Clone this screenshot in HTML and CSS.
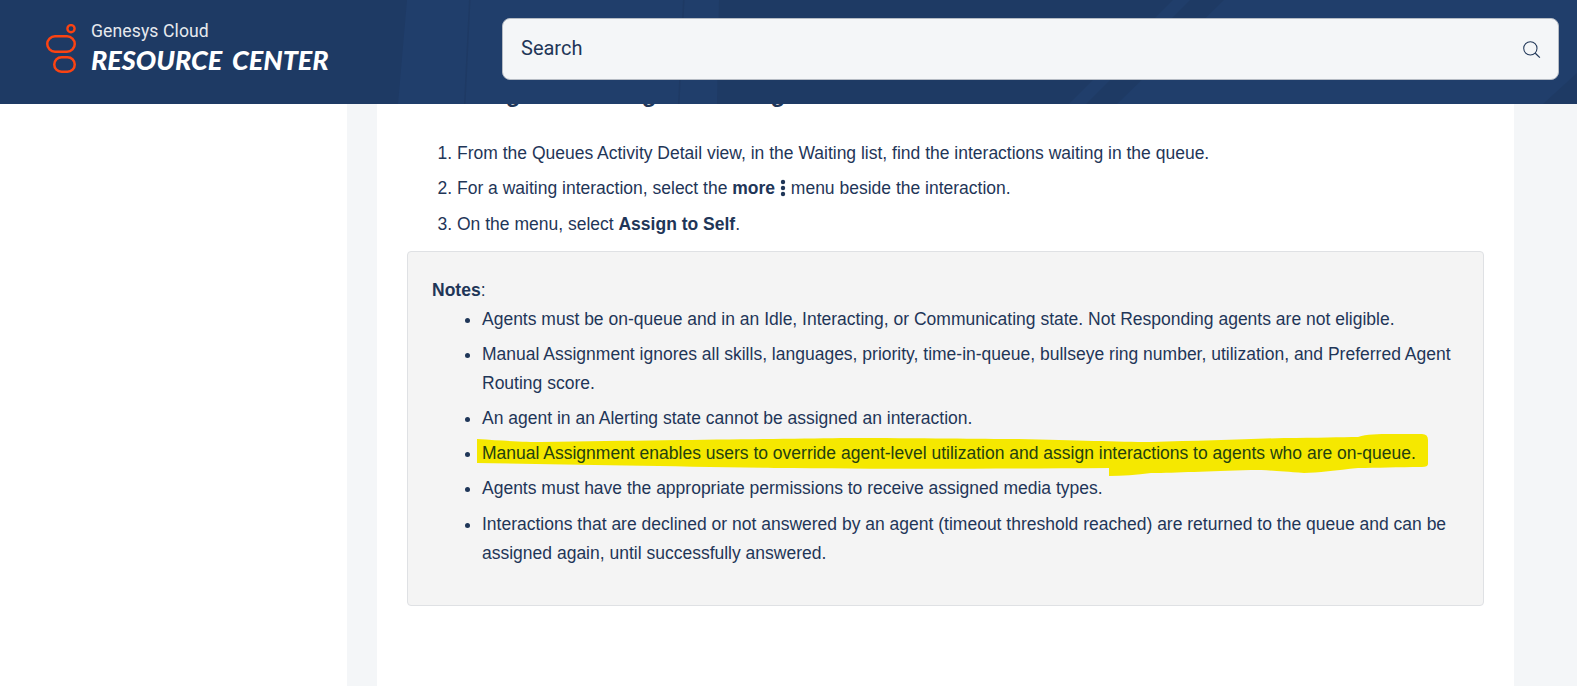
FILE: index.html
```html
<!DOCTYPE html>
<html lang="en">
<head>
<meta charset="utf-8">
<title>Genesys Cloud Resource Center</title>
<link rel="stylesheet" href="styles.css">
</head>
<body>
<header class="site-header">
  <svg class="stripes" viewBox="0 0 1577 104" preserveAspectRatio="none" aria-hidden="true">
    <polygon points="407,0 1577,0 1577,104 398,104" fill="#203e6b"/>
    <polygon points="469,0 470.5,0 465.5,104 464,104" fill="#1e3a64"/>
    <polygon points="683,0 684.5,0 679.5,104 678,104" fill="#1e3a64"/>
    <polygon points="719,0 1173,0 1069,104 717,104" fill="#1e3a64"/>
    <polygon points="1190,0 1224,0 1117,104 1086,104" fill="#1e3a64"/>
    <polygon points="1577,73 1577,104 1543,104" fill="#1e3a64"/>
  </svg>
  <a class="brand" href="#">
    <svg class="logo" viewBox="0 0 30 49" aria-hidden="true">
      <circle cx="25" cy="4.7" r="3.6" fill="none" stroke="#fb4312" stroke-width="2.4"/>
      <rect x="1.25" y="12.25" width="27.5" height="15.5" rx="7.75" fill="none" stroke="#fb4312" stroke-width="2.5"/>
      <rect x="8.25" y="33.25" width="20.5" height="14.5" rx="7.25" fill="none" stroke="#fb4312" stroke-width="2.5"/>
    </svg>
    <span class="brand-text">
      <span class="brand-top">Genesys Cloud</span>
      <span class="brand-main">RESOURCE CENTER</span>
    </span>
  </a>
  <div class="search">
    <span class="search-label">Search</span>
    <svg class="search-icon" viewBox="0 0 20 20" aria-hidden="true">
      <circle cx="8.8" cy="8.8" r="7" fill="none" stroke="#1f3658" stroke-width="1.1"/>
      <path d="M14 14l4.8 4.6" fill="none" stroke="#1f3658" stroke-width="1.3"/>
    </svg>
  </div>
</header>
<div class="page">
  <aside class="side"></aside>
  <div class="gutter"></div>
  <main class="content">
    <h2 class="clipped-heading">Self-assign a waiting call to agent</h2>
    <ol class="steps">
      <li>From the Queues Activity Detail view, in the Waiting list, find the interactions waiting in the queue.</li>
      <li>For a waiting interaction, select the <b>more</b> <svg class="kebab" viewBox="0 0 6 18" aria-hidden="true"><circle cx="3" cy="3" r="2.2"/><circle cx="3" cy="9" r="2.2"/><circle cx="3" cy="15" r="2.2"/></svg> menu beside the interaction.</li>
      <li>On the menu, select <b>Assign to Self</b>.</li>
    </ol>
    <section class="notes">
      <p class="notes-title"><b>Notes</b>:</p>
      <ul class="notes-list">
        <li>Agents must be on-queue and in an Idle, Interacting, or Communicating state. Not Responding agents are not eligible.</li>
        <li>Manual Assignment ignores all skills, languages, priority, time-in-queue, bullseye ring number, utilization, and Preferred Agent Routing score.</li>
        <li>An agent in an Alerting state cannot be assigned an interaction.</li>
        <li><span class="marked"><svg class="marker" viewBox="0 0 951 44" preserveAspectRatio="none" aria-hidden="true"><path d="M0 6C30 8 50 9 64 9C200 7 300 6 364 5C450 5 500 6 541 6C600 7 640 9 674 9C720 8 770 6 807 5C840 5 865 4 881 4C890 1 900 1 915 1L945 1Q951 1 951 7V31Q951 34 945 34C920 34 900 35 881 35C860 37 840 40 827 40C800 38 790 37 774 37C730 38 700 40 674 40C660 42 645 43 632 43V35C500 36 400 36 297 35C180 33 80 31 0 30Z" fill="#f5e800"/></svg><span class="marked-text">Manual Assignment enables users to override agent-level utilization and assign interactions to agents who are on-queue.</span></span></li>
        <li>Agents must have the appropriate permissions to receive assigned media types.</li>
        <li>Interactions that are declined or not answered by an agent (timeout threshold reached) are returned to the queue and can be assigned again, until successfully answered.</li>
      </ul>
    </section>
  </main>
  <div class="gutter"></div>
</div>
</body>
</html>
```

FILE: styles.css
```css
* { box-sizing: border-box; }
html, body { margin: 0; padding: 0; height: 100%; overflow: hidden; }
body { background: #fff; color: #1f3658; font-family: "Liberation Sans", Arial, sans-serif; font-size: 17.5px; }

.site-header { position: relative; height: 104px; background: #1e3a64; display: flex; align-items: flex-start; z-index: 2; }
.stripes { position: absolute; inset: 0; width: 100%; height: 100%; }
.brand { position: relative; display: flex; align-items: flex-start; width: 502px; padding: 24px 0 0 46px; color: #fff; text-decoration: none; flex: none; }
.logo { width: 30px; height: 49px; flex: none; }
.brand-text { display: flex; flex-direction: column; margin-left: 15px; margin-top: -2px; }
.brand-top { font-family: Roboto, sans-serif; font-size: 17.6px; line-height: 18px; color: #e6e9ee; letter-spacing: .1px; }
.brand-main { margin-top: 5px; font-family: Lato, sans-serif; font-weight: 900; font-style: italic; font-size: 27px; line-height: 30px; word-spacing: 4px; white-space: nowrap; }

.search { position: relative; width: 1057px; height: 62px; margin-top: 18px; padding: 0 17px 0 18px; display: flex; align-items: center; justify-content: space-between; background: #f4f6f8; border: 1px solid #b5bbc4; border-radius: 8px; }
.search-label { font-family: Roboto, sans-serif; font-size: 20px; color: #1f3658; margin-bottom: 2px; }
.search-icon { width: 19px; height: 19px; }

.page { display: flex; height: 582px; overflow: hidden; }
.side { width: 347px; flex: none; }
.gutter { width: 30px; flex: none; background: #f4f6f8; }
.gutter:last-child { width: 63px; }
.content { flex: none; width: 1137px; padding: 0 30px; position: relative; }
.clipped-heading { margin: -23px 0 0; font-size: 24px; line-height: 26px; color: #1f3658; font-weight: 700; white-space: nowrap; word-spacing: 6px; }

.steps { margin: 34px 0 0; padding: 0 0 0 50px; }
.steps li { line-height: 24px; margin-bottom: 11.3px; }
.steps b, .notes b { font-weight: 700; }
.kebab { width: 6px; height: 18px; vertical-align: -3px; fill: #1f3658; }

.notes { margin-top: 15px; width: 1077px; height: 355px; background: #f4f4f4; border: 1px solid #dfe1e4; border-radius: 4px; padding: 26px 24px 0; }
.notes-title { margin: 0; line-height: 24px; }
.notes-list { margin: 3px 0 0; padding: 0 0 0 50px; }
.notes-list li { line-height: 29px; margin-bottom: 6.2px; }
.marked { position: relative; display: inline-block; }
.marked-text { position: relative; color: #23400f; }
.marker { position: absolute; left: -5.5px; top: -6px; width: 951px; height: 44px; }
```
